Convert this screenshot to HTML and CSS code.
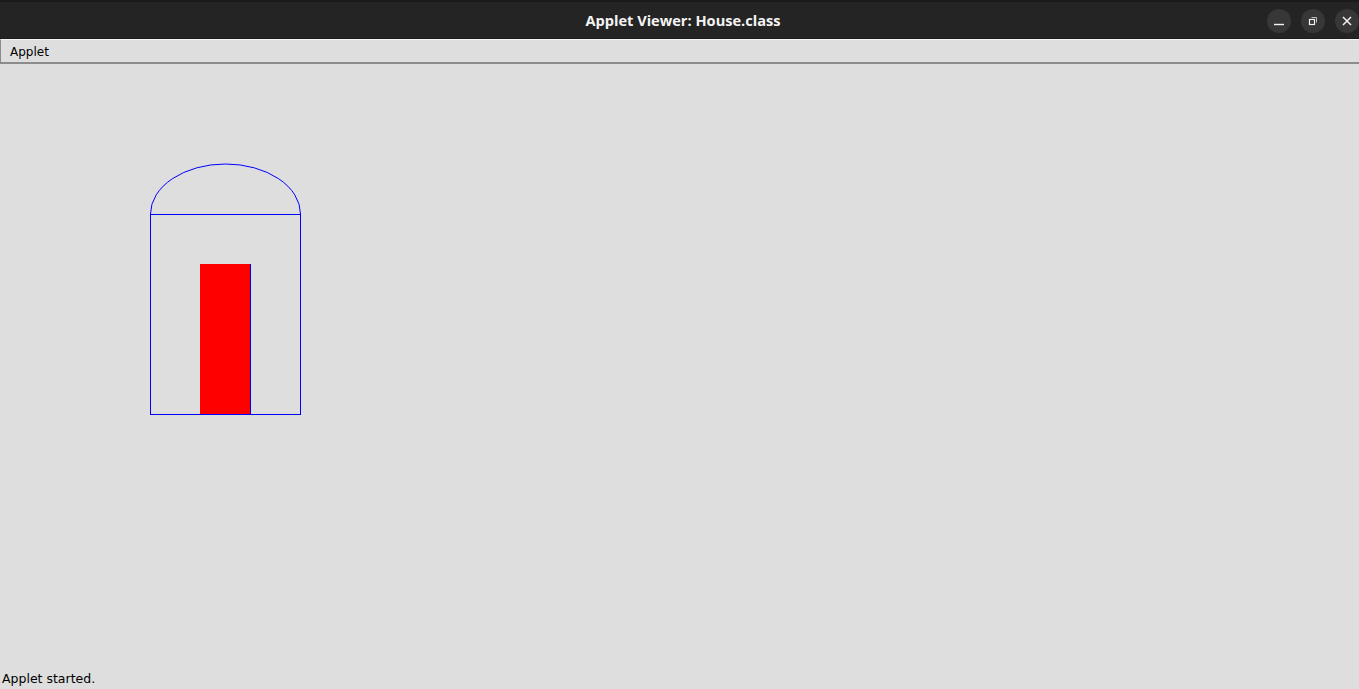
FILE: index.html
```html
<!DOCTYPE html>
<html>
<head>
<meta charset="utf-8">
<title>Applet Viewer: House.class</title>
<link rel="stylesheet" href="styles.css">
</head>
<body>
<div class="window">
  <header class="titlebar">
    <div class="title">Applet Viewer: House.class</div>
    <div class="controls">
      <span class="ctl"><svg width="24" height="24" viewBox="0 0 24 24"><line x1="7" y1="15.5" x2="17" y2="15.5" stroke="#f2f2f2" stroke-width="1.4"/></svg></span>
      <span class="ctl"><svg width="24" height="24" viewBox="0 0 24 24"><rect x="8.5" y="10.5" width="5" height="5" fill="none" stroke="#f2f2f2" stroke-width="1.2"/><path d="M10.5 8.5 H15.5 V13.5" fill="none" stroke="#bdbdbd" stroke-width="1"/></svg></span>
      <span class="ctl"><svg width="24" height="24" viewBox="0 0 24 24"><path d="M8 8 L16 16 M16 8 L8 16" stroke="#f2f2f2" stroke-width="1.5"/></svg></span>
    </div>
  </header>
  <nav class="menubar"><span class="menu">Applet</span></nav>
  <main class="applet">
    <svg class="canvas" width="1359" height="604" viewBox="0 0 1359 604">
      <path d="M150.5 150 A75 50 0 0 1 300.5 150" fill="none" stroke="#0000ff" stroke-width="1"/>
      <rect x="150.5" y="150.5" width="150" height="200" fill="none" stroke="#0000ff" stroke-width="1" shape-rendering="crispEdges"/>
      <rect x="200" y="200" width="50" height="150" fill="#ff0000" shape-rendering="crispEdges"/>
      <line x1="250.5" y1="200" x2="250.5" y2="351" stroke="#0000ff" stroke-width="1" shape-rendering="crispEdges"/>
    </svg>
  </main>
  <footer class="status">Applet started.</footer>
</div>
</body>
</html>
```
FILE: styles.css
```css
html, body {
  margin: 0;
  padding: 0;
  background: #dedede;
}
.window {
  width: 1359px;
  height: 689px;
  display: flex;
  flex-direction: column;
  overflow: hidden;
  font-family: "DejaVu Sans", sans-serif;
}
.titlebar {
  height: 39px;
  flex: 0 0 39px;
  box-sizing: border-box;
  background: #242424;
  border-top: 2px solid #1a1a1a;
  border-bottom: 1px solid #1c1c1c;
  position: relative;
  display: flex;
  align-items: center;
  justify-content: center;
}
.title {
  color: #f4f4f4;
  font-family: "Open Sans", sans-serif;
  font-weight: 700;
  font-size: 14.6px;
  padding-left: 7px;
}
.controls {
  position: absolute;
  right: 0;
  top: 7px;
  display: flex;
  gap: 10px;
}
.ctl {
  width: 24px;
  height: 24px;
  border-radius: 50%;
  background: #373737;
  display: flex;
}
.menubar {
  height: 25px;
  flex: 0 0 25px;
  box-sizing: border-box;
  background: #dedede;
  border-top: 1px solid #f4f4f4;
  border-left: 1px solid #8a8a8a;
  border-bottom: 2px solid #8c8c8c;
  display: flex;
  align-items: center;
}
.menu {
  font-size: 12px;
  color: #000;
  padding-left: 9px;
  padding-top: 1px;
}
.applet {
  flex: 1;
  display: flex;
}
.canvas {
  display: block;
}
.status {
  height: 21px;
  flex: 0 0 21px;
  font-size: 12.5px;
  color: #000;
  padding-left: 2px;
  line-height: 21px;
}
```
